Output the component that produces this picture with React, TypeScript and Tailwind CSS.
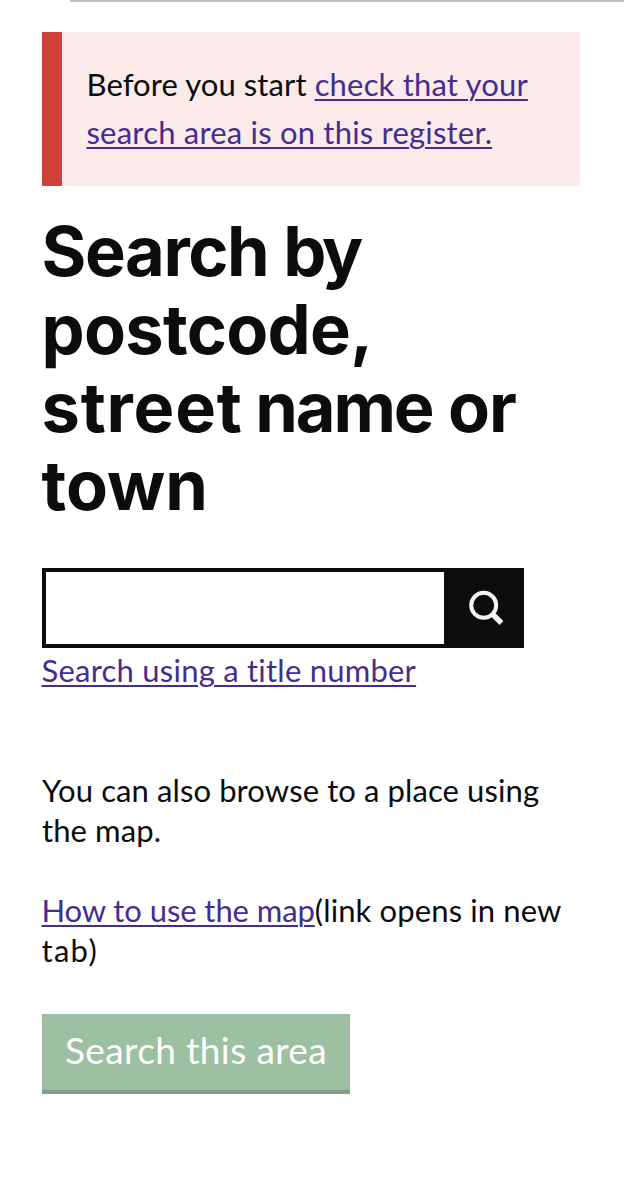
const link =
  "text-[#452d8f] underline decoration-2 underline-offset-[3px]";

export default function App() {
  return (
    <main className="h-[1200px] w-[624px] overflow-hidden bg-white pr-0.5 text-[31px] leading-10 text-[#0b0c0c] font-['Lato','Liberation_Sans',sans-serif] flex">
      <div className="flex-1 flex flex-col items-start pl-[42px]">
        <div className="ml-7 h-0.5 w-[554px] shrink-0 bg-[#c1c0c0]" />

        <section className="mt-[30px] h-[154px] w-[538px] shrink-0 border-l-20 border-[#d0403b] bg-[#faebea] pl-[24.5px] pt-7 leading-12 whitespace-nowrap">
          <p>
            <span className="tracking-[0.08px]">Before you start </span>
            <a href="#register" className={`tracking-[0.18px] ${link}`}>check that your</a>
            <br />
            <a href="#register" className={`tracking-[0.2px] ${link}`}>search area is on this register.</a>
          </p>
        </section>

        <h1 className="mt-[27px] -ml-[0.5px] shrink-0 text-[68.5px] leading-[78px] font-bold whitespace-nowrap font-['Inter','Liberation_Sans',sans-serif]">
          <span className="block tracking-[-1.4px]">Search <span className="tracking-[-3.2px]">by</span></span>
          <span className="block tracking-[-0.7px]">postcode,</span>
          <span className="block tracking-[-0.7px]">
            <span className="tracking-[0.8px]">street</span>{" "}
            <span className="-ml-[3px] tracking-[-2.1px]">name</span>{" "}
            <span className="tracking-[-1px]">or</span>
          </span>
          <span className="block tracking-[0px]">town</span>
        </h1>

        <form className="mt-[43px] flex h-20 w-[482px] shrink-0 bg-[#0b0c0c]" onSubmit={(e) => e.preventDefault()}>
          <input aria-label="Postcode, street name or town" className="my-1 ml-1 h-[72px] w-[398px] bg-white px-3 outline-none" />
          <button aria-label="Search" className="flex flex-1 justify-start pl-[25px] pt-[22px]">
            <svg width="36" height="36" viewBox="0 0 36 36" fill="none" stroke="#f4f4f4">
              <circle cx="14.7" cy="15.3" r="12.5" strokeWidth="4" />
              <path d="M23.3 24 32.5 33" strokeWidth="5.4" />
            </svg>
          </button>
        </form>

        <a href="#title" className={`mt-0.5 -ml-[0.5px] shrink-0 whitespace-nowrap tracking-[0.23px] ${link}`}>Search using a title number</a>

        <p className="mt-20 shrink-0 whitespace-nowrap tracking-[0.1px]">
          You can also browse to a place using
          <br />
          the map.
        </p>

        <p className="mt-10 -ml-[0.5px] shrink-0 whitespace-nowrap tracking-[0.12px]">
          <a href="#help" className={`tracking-[-0.08px] ${link}`}>How to use the map</a>
          (link opens in new
          <br />
          <span className="tracking-[1.3px]">tab)</span>
        </p>

        <button className="mt-11 h-20 w-[308px] shrink-0 border-b-4 border-[#879a8c] bg-[#9dbfa2] pb-[4px] text-[37px] tracking-[0.4px] text-white">
          Search this area
        </button>
      </div>
      <div className="-mr-0.5 mt-2 w-0.5 bg-[#dedede]" />
    </main>
  );
}
